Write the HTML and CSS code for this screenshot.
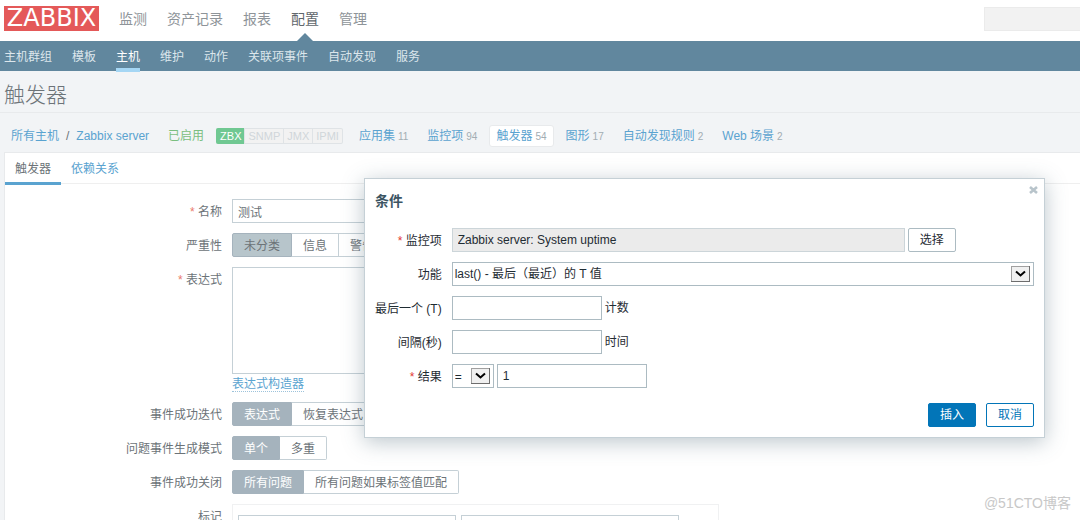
FILE: index.html
```html
<!DOCTYPE html>
<html lang="zh-CN">
<head>
<meta charset="utf-8">
<title>触发器</title>
<link rel="stylesheet" href="styles.css">
</head>
<body>
<header class="topbar">
  <a class="logo" href="#">ZABBIX</a>
  <nav class="mainnav">
    <a href="#">监测</a>
    <a href="#">资产记录</a>
    <a href="#">报表</a>
    <a href="#" class="current">配置</a>
    <a href="#">管理</a>
  </nav>
  <input class="search" type="text" aria-label="搜索">
</header>
<nav class="subnav">
  <a href="#">主机群组</a>
  <a href="#">模板</a>
  <a href="#" class="current">主机</a>
  <a href="#">维护</a>
  <a href="#">动作</a>
  <a href="#">关联项事件</a>
  <a href="#">自动发现</a>
  <a href="#">服务</a>
</nav>
<h1 class="title">触发器</h1>
<div class="hostbar">
  <div class="crumbs"><a href="#">所有主机</a><span>/</span><a href="#">Zabbix server</a></div>
  <span class="enabled">已启用</span>
  <div class="badges"><span class="on">ZBX</span><span>SNMP</span><span>JMX</span><span>IPMI</span></div>
  <nav class="hostlinks">
    <a href="#">应用集<small>11</small></a>
    <a href="#">监控项<small>94</small></a>
    <a href="#" class="current">触发器<small>54</small></a>
    <a href="#">图形<small>17</small></a>
    <a href="#">自动发现规则<small>2</small></a>
    <a href="#">Web 场景<small>2</small></a>
  </nav>
</div>
<main class="panel">
  <nav class="tabs">
    <a href="#" class="current">触发器</a>
    <a href="#">依赖关系</a>
  </nav>
  <form class="form">
    <label class="label required" for="name">名称</label>
    <input class="field" id="name" type="text" value="测试">

    <span class="label">严重性</span>
    <div class="segmented severity">
      <label><input type="radio" name="severity" checked>未分类</label>
      <label><input type="radio" name="severity">信息</label>
      <label><input type="radio" name="severity">警告</label>
    </div>

    <label class="label required" for="expression">表达式</label>
    <div class="expression">
      <textarea class="field" id="expression"></textarea>
      <a href="#">表达式构造器</a>
    </div>

    <span class="label">事件成功迭代</span>
    <div class="segmented">
      <label><input type="radio" name="recovery" checked>表达式</label>
      <label><input type="radio" name="recovery">恢复表达式</label>
    </div>

    <span class="label">问题事件生成模式</span>
    <div class="segmented">
      <label><input type="radio" name="mode" checked>单个</label>
      <label><input type="radio" name="mode">多重</label>
    </div>

    <span class="label">事件成功关闭</span>
    <div class="segmented">
      <label><input type="radio" name="close" checked>所有问题</label>
      <label><input type="radio" name="close">所有问题如果标签值匹配</label>
    </div>

    <span class="label">标记</span>
    <div class="tags">
      <input class="field" type="text" aria-label="标记">
      <input class="field" type="text" aria-label="值">
    </div>
  </form>
</main>

<section class="dialog" role="dialog" aria-labelledby="dialog-title">
  <button class="close" type="button" aria-label="关闭">
    <svg width="9" height="8" viewBox="0 0 9 8"><path d="M1 1L8 7M8 1L1 7" stroke="currentColor" stroke-width="2.6" fill="none"/></svg>
  </button>
  <h2 id="dialog-title">条件</h2>
  <form class="dialog-form">
    <label class="label required" for="item">监控项</label>
    <div class="row">
      <input class="field item" id="item" type="text" value="Zabbix server: System uptime" readonly>
      <button class="btn plain" type="button">选择</button>
    </div>
    <label class="label" for="func">功能</label>
    <div class="select">
      <select id="func"><option>last() - 最后（最近）的 T 值</option></select>
      <svg class="arrow" width="19" height="16" viewBox="0 0 19 16"><path d="M0 0H19V16H0Z" fill="#6d6d6d"/><path d="M0 0H18V15H0Z" fill="#a0a0a0"/><path d="M1 1H18V15H1Z" fill="#f0f0f0"/><path d="M5 5.5L9.5 9.5L14 5.5" fill="none" stroke="#000" stroke-width="2"/></svg>
    </div>
    <label class="label" for="last">最后一个 (T)</label>
    <div class="row"><input class="field short" id="last" type="text"><span>计数</span></div>
    <label class="label" for="shift">间隔(秒)</label>
    <div class="row"><input class="field short" id="shift" type="text"><span>时间</span></div>
    <label class="label required" for="result">结果</label>
    <div class="row">
      <div class="select operator">
        <select aria-label="运算符"><option>=</option></select>
        <svg class="arrow" width="19" height="16" viewBox="0 0 19 16"><path d="M0 0H19V16H0Z" fill="#6d6d6d"/><path d="M0 0H18V15H0Z" fill="#a0a0a0"/><path d="M1 1H18V15H1Z" fill="#f0f0f0"/><path d="M5 5.5L9.5 9.5L14 5.5" fill="none" stroke="#000" stroke-width="2"/></svg>
      </div>
      <input class="field short" id="result" type="text" value="1">
    </div>
  </form>
  <footer class="actions">
    <button class="btn primary" type="button">插入</button>
    <button class="btn" type="button">取消</button>
  </footer>
</section>
<span class="watermark">@51CTO博客</span>
</body>
</html>
```

FILE: styles.css
```css
* { box-sizing: border-box; }

body {
  margin: 0;
  height: 100vh;
  overflow: hidden;
  display: flex;
  flex-direction: column;
  position: relative;
  background: #f2f4f6;
  color: #6c7378;
  font: 12px/16px "Liberation Sans", "Noto Sans CJK SC", sans-serif;
}

a { color: #5aa3d0; text-decoration: none; }
input, select, textarea, button { font: inherit; color: inherit; margin: 0; }

.topbar {
  flex: none;
  height: 41px;
  padding-left: 4px;
  display: flex;
  align-items: center;
  background: #fff;
}
.logo {
  width: 95px;
  height: 25px;
  margin-bottom: 4px;
  background: #e45959;
  color: #fff;
  font: 24px/25px "DejaVu Sans", sans-serif;
  text-align: center;
}
.mainnav {
  align-self: stretch;
  display: flex;
  gap: 20px;
  margin-left: 20px;
  font-size: 14px;
  line-height: 38px;
}
.mainnav a { color: #8e9499; position: relative; }
.mainnav .current { color: #5f676c; }
.mainnav .current::after {
  content: "";
  position: absolute;
  left: 6px;
  bottom: 0;
  border: 8px solid transparent;
  border-top: 0;
  border-bottom-color: #61879e;
}
.search {
  width: 96px;
  height: 24px;
  margin: 0 0 3px auto;
  border: 1px solid #ebebeb;
  border-right: 0;
  background: #f2f2f2;
}

.subnav {
  flex: none;
  display: flex;
  gap: 20px;
  height: 30px;
  padding-left: 4px;
  background: #61879e;
  line-height: 32px;
}
.subnav a { color: #dce6ec; height: 31px; }
.subnav .current { color: #fff; border-bottom: 4px solid #a5d6f4; }

.title {
  flex: none;
  margin: 0;
  padding: 0 4px;
  height: 42px;
  border-bottom: 1px solid #e8eaec;
  font-size: 21px;
  line-height: 48px;
  font-weight: 300;
}

.hostbar {
  flex: none;
  display: flex;
  align-items: center;
  height: 39px;
  padding: 6px 0 0 11px;
}
.crumbs { display: flex; gap: 7px; }
.enabled { margin: 0 12px 0 19px; color: #7bbf80; }
.badges {
  display: flex;
  margin-right: 9px;
  border: 1px solid #dfe3e6;
  border-left: 0;
  border-radius: 2px;
  background: #f2f2f2;
  color: #d0d6da;
  font-size: 11px;
  line-height: 14px;
}
.badges span { padding: 0 3px; }
.badges span + span { border-left: 1px solid #dfe3e6; }
.badges .on { margin: -1px 0; padding: 1px 3px 1px 4px; background: #70c892; color: #fff; border-radius: 2px 0 0 2px; }
.hostlinks { display: flex; gap: 5px; }
.hostlinks a {
  padding: 2px 6px;
  border: 1px solid transparent;
  border-radius: 3px;
  white-space: nowrap;
}
.hostlinks .current { background: #fff; border-color: #e8eaec; }
.hostlinks small { margin-left: 3px; font-size: 9px; line-height: 1; color: #a2adb3; }
.hostlinks small { font-size: 10px; }

.panel {
  flex: 1 0 auto;
  margin-left: 4px;
  background: #fff;
  border: 1px solid #e8eaec;
  border-right: 0;
}
.tabs { display: flex; height: 31px; border-bottom: 1px solid #efefef; line-height: 32px; }
.tabs a { padding: 0 10px; height: 32px; }
.tabs .current { color: #6c7378; border-bottom: 3px solid #5aa3d0; }

.form {
  display: grid;
  grid-template-columns: 217px 1fr;
  gap: 10px;
  padding-top: 15px;
}
.label { height: 24px; text-align: right; line-height: 26px; white-space: nowrap; }
.required::before { content: "* "; color: #ea7a6d; }
.field {
  height: 24px;
  padding: 0 5px;
  border: 1px solid #c5d0d6;
  border-radius: 0;
  background: #fff;
  outline: 0;
}
.form > .field { max-width: 453px; }
.expression { display: flex; flex-direction: column; align-items: flex-start; }
.expression .field { width: 100%; max-width: 453px; height: 107px; resize: none; }
.expression a { height: 18px; line-height: 20px; border-bottom: 1px dotted #9dc3db; }

.segmented { display: flex; height: 24px; line-height: 24px; }
.segmented label {
  padding: 0 11px;
  border: 1px solid #c5d0d6;
  border-left: 0;
}
.segmented label:first-child { border-left: 1px solid; border-radius: 2px 0 0 2px; }
.segmented label:last-child { border-radius: 0 2px 2px 0; }
.segmented input { appearance: none; position: absolute; }
.segmented label:has(:checked) { background: #a5b3bd; border-color: #a5b3bd; color: #fff; }
.severity label:has(:checked) { background: #b7c5cb; border-color: #a5b3bd; color: #6c7378; }

.tags {
  display: flex;
  gap: 5px;
  width: 487px;
  max-width: 100%;
  padding: 10px 5px;
  border: 1px solid #f0f1f2;
}
.tags .field { width: 218px; }

.dialog {
  position: absolute;
  top: 178px;
  right: 35px;
  width: 681px;
  padding: 10px;
  border: 1px solid #c5d0d6;
  background: #fff;
  color: #1f2c33;
  box-shadow: 0 4px 20px rgba(62, 92, 108, 0.35);
}
.dialog h2 { margin: 2px 0 17px; color: #3c5563; font-size: 14px; line-height: 20px; }
.close {
  position: absolute;
  top: 7px;
  right: 6px;
  padding: 0;
  border: 0;
  background: none;
  color: #b8c4cb;
  line-height: 8px;
}
.close svg { display: block; }
.dialog-form { display: grid; grid-template-columns: max-content 1fr; gap: 10px; }
.dialog .required::before { color: #e33734; }
.dialog .field, .select select { border-color: #acbbc2; }
.row { display: flex; gap: 3px; line-height: 24px; }
.dialog .item { width: 453px; background: #ebebeb; border-color: #ccd5d9; }
.short { width: 150px; }
.select { display: grid; align-items: center; }
.select select {
  grid-area: 1 / 1;
  width: 100%;
  height: 24px;
  padding: 0 2px;
  appearance: none;
  border: 1px solid #acbbc2;
  border-radius: 0;
  background: #fff;
}
.arrow { grid-area: 1 / 1; justify-self: end; margin-right: 4px; pointer-events: none; }
.operator { width: 42px; }

.btn {
  height: 24px;
  padding: 0 11px;
  border: 1px solid #0275b8;
  border-radius: 2px;
  background: #fff;
  color: #0275b8;
  line-height: 22px;
}
.plain { border-color: #acbbc2; color: #1f2c33; }
.primary { background: #0275b8; color: #fff; }
.actions { display: flex; justify-content: flex-end; gap: 10px; margin-top: 15px; }

.watermark {
  position: absolute;
  right: 9px;
  bottom: 7px;
  color: #c8c8c8;
  font-size: 14px;
  line-height: 20px;
}
```
